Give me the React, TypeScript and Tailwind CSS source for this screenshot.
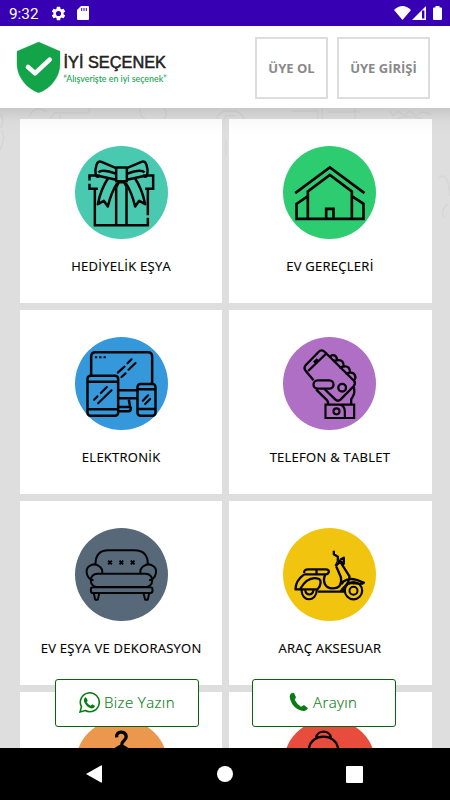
import React from "react";

function Circle({ box, color, children }: { box: string; color: string; children: React.ReactNode }) {
  const [x, y] = box.split(" ").map(Number);
  return (
    <svg className="h-[93px] w-[93px] shrink-0" viewBox={box + " 279 279"} fill="none" stroke="#050505" strokeWidth="7.5" strokeLinejoin="round">
      <circle cx={x + 139.5} cy={y + 139.5} r="139.5" fill={color} stroke="none" />
      {children}
    </svg>
  );
}

const Gift = () => (
  <Circle box="28.5 18.5" color="#48c9b0">
    <path d="M72 122V107H103M72 132V147H97M232 107H263V147H239M88 147V256H247V234M247 147V226M152 143V256M183 143V256" strokeLinejoin="miter" />
    <path d="M152 83H184V124H152ZM152 85L108 66Q98 62 93 75Q87 91 91 107Q94 113 104 109L152 120M99 98C106 89 131 94 152 102M184 85L228 66Q238 62 243 75Q249 91 245 107Q242 113 232 109L184 120M237 98C230 89 205 94 184 102" />
    <path d="M129 113C113 137 103 162 97 193L115 183L127 200C135 168 145 145 155 130M207 113C223 137 233 162 239 193L221 183L209 200C201 168 191 145 181 130M152 143L160 127H176L184 143" />
  </Circle>
);

const House = () => (
  <Circle box="24.5 18.5" color="#2ecc71">
    <path d="M61 160L165 83L269 160M99 237V155L165 105L231 155V237M99 169L65 192V237H266V192L231 169M154 237V207H176V237" strokeLinejoin="miter" strokeWidth="8" />
  </Circle>
);

const Devices = () => (
  <Circle box="28.5 21" color="#3498db">
    <path d="M77 135V80Q77 67 90 67H247Q260 67 260 80V160M160 181H215M160 205H215M160 231H194L190 209M160 244H190Q197 242 196 231" />
    <rect x="66" y="137" width="92" height="120" rx="9" />
    <path d="M66 155H158M66 238H158M216 178H270M216 237H270" />
    <rect x="216" y="162" width="54" height="95" rx="9" />
    <path d="M157 128L177 110M186 100L198 88M168 141L180 130M189 119L210 99M86 209L96 199M106 189L124 171M98 220L138 181M232 212L248 196M239 222L254 207" strokeLinecap="round" strokeWidth="6.5" />
    <path d="M88 82H95M101 82H108M114 82H121" strokeWidth="6" />
  </Circle>
);

const Phone = () => (
  <Circle box="54.5 21" color="#af6fc5">
    <path d="M146 151L123 123Q115 114 123 105L161 66Q170 56 180 66L268 153Q273 160 267 168L227 209Q219 216 211 208L179 177M130 123L186 69M147 97L158 87" strokeWidth="7" />
    <rect x="146" y="151" width="60" height="25" rx="12.5" strokeWidth="7" />
    <circle cx="232" cy="173" r="11.5" strokeWidth="7" />
    <path d="M196 81C202 71 216 75 217 91C231 88 238 97 236 110C249 107 257 115 255 128C269 126 277 141 267 151M204 93L217 91M223 113L236 110M242 131L255 128M154 179L184 208Q191 214 190 224M267 171C271 189 267 195 259 208V224" strokeWidth="7" />
    <path d="M182 224H268V264H182ZM222 224Q239 224 240 244V264" strokeLinejoin="miter" strokeWidth="6.5" />
    <circle cx="215" cy="244" r="9" strokeWidth="6.5" />
  </Circle>
);

const Sofa = () => (
  <Circle box="118.5 24" color="#576879">
    <path d="M180 133C180 106 192 91 219 91H296C323 91 337 106 337 133M174 181C152 176 149 151 159 140C178 124 204 140 200 161M341 181C363 176 366 151 356 140C337 124 311 140 315 161" strokeWidth="6" />
    <rect x="166" y="161" width="184" height="40" rx="19" strokeWidth="6" />
    <rect x="166" y="202" width="185" height="17" rx="7" strokeWidth="6" />
    <path d="M175 220L179 239H187L191 220M324 220L329 239H337L341 220M218 122L229 133M229 122L218 133M252 122L263 133M263 122L252 133M286 122L297 133M297 122L286 133" strokeWidth="6" />
  </Circle>
);

const Scooter = () => (
  <Circle box="39.5 24" color="#f1c40f">
    <path d="M103 159Q102 148 115 148H168Q178 149 177 155Q176 163 167 163H103M140 148V163M103 163C89 173 77 188 77 208H143C155 195 154 181 148 177C125 169 106 181 91 207M167 163C156 184 166 205 188 205C211 205 217 190 213 171L199 139M144 215H228M219 205L212 215M198 138L211 125L239 169C239 190 225 200 219 205M197 138L203 127M192 92V103L204 110V126M206 121L222 131V113L211 119M215 193C221 179 240 174 257 179C268 182 278 187 282 188C276 195 260 190 247 189C231 188 221 198 224 212" strokeWidth="7" />
    <circle cx="251" cy="212" r="26" strokeWidth="6.5" />
    <circle cx="251" cy="212" r="12" strokeWidth="6" />
    <path d="M95 210C96 247 139 247 141 210M106 210C109 228 128 228 131 210" strokeWidth="6.5" />
  </Circle>
);

const Hanger = () => (
  <Circle box="223.5 177" color="#eb984e">
    <path d="M349 232C344 212 377 211 377 230C377 243 363 240 363 257L330 277M363 257L396 277" strokeWidth="10" />
  </Circle>
);

const Bag = () => (
  <Circle box="174.5 177" color="#e74c3c">
    <path d="M274 233C277 209 315 209 318 233M252 266C259 218 333 218 340 266" strokeWidth="7" />
  </Circle>
);

const items = [
  { label: "HEDİYELİK EŞYA", Icon: Gift },
  { label: "EV GEREÇLERİ", Icon: House },
  { label: "ELEKTRONİK", Icon: Devices },
  { label: "TELEFON & TABLET", Icon: Phone },
  { label: "EV EŞYA VE DEKORASYON", Icon: Sofa },
  { label: "ARAÇ AKSESUAR", Icon: Scooter },
  { label: "", Icon: Hanger },
  { label: "", Icon: Bag },
];

export default function App() {
  return (
    <div className="relative flex h-[800px] w-[450px] flex-col overflow-hidden bg-[#dedede] font-['Open_Sans','Noto_Sans',sans-serif]">
      <div className="flex h-[26px] shrink-0 items-center bg-[#3700b3] text-white">
        <span className="mt-[3px] ml-[9px] w-[30px] font-[Roboto,sans-serif] text-[15.3px] leading-none">9:32</span>
        <svg className="ml-[11px] h-[17px] w-[17px]" viewBox="0 0 24 24" fill="currentColor"><path d="M19.14 12.94c.04-.3.06-.61.06-.94s-.02-.64-.07-.94l2.03-1.58a.5.5 0 0 0 .12-.61l-1.92-3.32a.5.5 0 0 0-.59-.22l-2.39.96a7 7 0 0 0-1.62-.94l-.36-2.54A.5.5 0 0 0 13.92 2.4h-3.84a.5.5 0 0 0-.47.41l-.36 2.54a7 7 0 0 0-1.62.94l-2.39-.96a.5.5 0 0 0-.59.22L2.74 8.87a.5.5 0 0 0 .12.61l2.03 1.58a6 6 0 0 0 0 1.88l-2.03 1.58a.5.5 0 0 0-.12.61l1.92 3.32c.12.22.37.29.59.22l2.39-.96c.5.38 1.03.7 1.62.94l.36 2.54c.05.24.24.41.48.41h3.84c.24 0 .44-.17.47-.41l.36-2.54a7 7 0 0 0 1.62-.94l2.39.96c.22.08.47 0 .59-.22l1.92-3.32a.5.5 0 0 0-.12-.61ZM12 15.6a3.6 3.6 0 1 1 0-7.2 3.6 3.6 0 0 1 0 7.2Z" /></svg>
        <svg className="ml-[10px] h-[14px] w-[12px]" viewBox="0 0 12 14"><path d="M4 0H11Q12 0 12 1V13Q12 14 11 14H1Q0 14 0 13V4Z" fill="currentColor" /><path d="M4.7 2V5M7 2V5M9.3 2V5" stroke="#3700b3" /></svg>
        <svg className="ml-auto h-[14px] w-[17px]" viewBox="0 0 17 14"><path d="M0 4Q8.5-4 17 4L8.5 14Z" fill="currentColor" /></svg>
        <svg className="ml-[1px] h-[14px] w-[14px]" viewBox="0 0 14 14"><path d="M0 14L14 0V14Z" fill="currentColor" /><path d="M11.2 4.5V12.5" stroke="#3700b3" strokeWidth="2.4" /></svg>
        <svg className="mr-[8px] ml-[7px] h-[14px] w-[9px]" viewBox="0 0 9 14" fill="currentColor"><path d="M2.5 0H6.5V1.5H8Q9 1.5 9 2.5V13Q9 14 8 14H1Q0 14 0 13V2.5Q0 1.5 1 1.5H2.5Z" /></svg>
      </div>

      <header className="flex h-[82px] shrink-0 items-center bg-white">
        <svg className="ml-[16px] h-[52px] w-[45px]" viewBox="48 123 135 156">
          <path d="M116 126L180 154V192C180 231 151 267 116 278C81 267 51 231 51 192V154Z" fill="#13a44a" stroke="#13a44a" strokeWidth="1" strokeLinejoin="round" />
          <path d="M84 201L105 220L149 179" fill="none" stroke="white" strokeWidth="14" strokeLinecap="round" strokeLinejoin="round" />
        </svg>
        <svg className="ml-[2px] h-[52px] w-[107px]" viewBox="0 0 107 52">
          <text x="0.5" y="27.4" textLength="102.5" lengthAdjust="spacingAndGlyphs" className="fill-[#222222] font-['Liberation_Sans',Arial,sans-serif] text-[16.6px]" stroke="#222222" strokeWidth="0.5">İYİ SEÇENEK</text>
          <text x="0.5" y="40.5" textLength="103" lengthAdjust="spacingAndGlyphs" className="fill-[#13a44a] font-[Lato,sans-serif] text-[9px] font-medium">“Alışverişte en iyi seçenek”</text>
        </svg>
        <div className="mt-[2px] mr-[20px] ml-auto flex gap-[9px] text-[13px] font-bold text-[#898989]">
          <button className="h-[62px] w-[73px] border-2 border-[#dddddd] pt-[2px] whitespace-nowrap">ÜYE OL</button>
          <button className="h-[62px] w-[93px] border-2 border-[#dddddd] pt-[2px] whitespace-nowrap">ÜYE GİRİŞİ</button>
        </div>
      </header>

      <main className="relative h-[640px] shrink-0 overflow-hidden">
        <svg className="absolute inset-x-0 top-0 h-[110px] w-full" viewBox="0 0 450 110" fill="none" stroke="#d6d6d6" strokeWidth="1.5">
          <path d="M0 6Q5 10 1 20M0 42Q6 30 2 22M29 8Q36-4 47 4M50 11L54 5H88L90 0M60 11V7M140 0Q139 8 145 11M164 11Q169 5 163 0M216 11Q219 2 230 3Q241 2 244 11M224 11Q226 6 235 8M292 3H318V11M322 0V11M355 0V11M328 4H360M390 3L393 8L398 3L404 8L410 3L416 8L422 4L431 6M396 11Q408 6 423 11M226 32V48M439 70Q448 62 450 88M448 96Q440 102 444 110" />
        </svg>
        <div className="relative ml-5 grid w-[411.5px] grid-cols-2 gap-x-[7px] gap-y-[7px] pt-[11px]">
          {items.map(({ label, Icon }, i) => (
            <section key={i} className="flex h-[184px] flex-col items-center bg-white pt-[27px] even:pr-[1px]">
              <Icon />
              {label && <h2 className="mt-[18px] text-[13px] leading-[18px] font-medium tracking-[0.27px] whitespace-nowrap text-black [-webkit-text-stroke:0.15px_black]">{label}</h2>}
            </section>
          ))}
        </div>
        <div className="absolute inset-x-0 top-0 h-[28px] bg-linear-to-b from-black/10 via-black/2 via-45% to-transparent" />
        <div className="absolute top-[571px] left-[55px] flex gap-[53px]">
          <button className="flex h-[48px] w-[144px] items-center rounded-[3px] border border-[#08630c] bg-white pl-[23px] text-[#087c12]">
            <svg className="mt-[-2px] h-[21px] w-[21px]" viewBox="0 0 60 60" fill="none" stroke="currentColor" strokeWidth="4.5"><path d="M3 57L7 42A27 27 0 1 1 18 53Z" /><path d="M20 15L25 24L22 29Q26 36 33 39L38 35L46 40Q44 47 36 47C26 45 16 35 14 25Q14 16 20 15Z" fill="currentColor" stroke="none" /></svg>
            <span className="mt-[-2px] ml-[4px] text-[15px] font-light tracking-[0.4px] whitespace-nowrap [-webkit-text-stroke:0.15px_currentColor]">Bize Yazın</span>
          </button>
          <button className="flex h-[48px] w-[144px] items-center rounded-[3px] border border-[#08630c] bg-white pl-[36px] text-[#087c12]">
            <svg className="mt-[-3px] h-[20px] w-[20px]" viewBox="0 0 60 60"><path d="M11 2Q3 4 2 14C5 37 22 54 44 57Q52 58 57 49L45 39L36 44Q24 37 17 23L21 16L15 3Z" fill="currentColor" /></svg>
            <span className="mt-[-2px] ml-[4px] text-[15px] font-light tracking-[0.4px] whitespace-nowrap [-webkit-text-stroke:0.15px_currentColor]">Arayın</span>
          </button>
        </div>
      </main>

      <nav className="flex h-[52px] shrink-0 items-center bg-black text-white">
        <svg className="ml-[86px] h-[18px] w-[16px]" viewBox="0 0 16 18"><path d="M0 9L15 0.5Q16 0 16 1V17Q16 18 15 17.5Z" fill="currentColor" /></svg>
        <div className="ml-[115px] h-4 w-4 rounded-full bg-white" />
        <div className="ml-[113px] h-[17px] w-[17px] rounded-[1px] bg-white" />
      </nav>
    </div>
  );
}
